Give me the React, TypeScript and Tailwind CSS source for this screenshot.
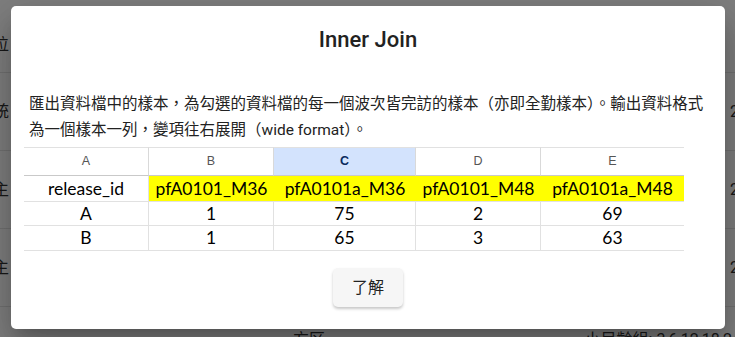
import React from 'react';

const cjk = '"Roboto", "Noto Sans CJK TC", sans-serif';

const bgRows = [
  { left: '位', right: '', h: 73 },
  { left: '統', right: '2', h: 78 },
  { left: '主', right: '2', h: 78 },
  { left: '主', right: '2', h: 78 },
];

const cols = ['A', 'B', 'C', 'D', 'E'];
const header = ['release_id', 'pfA0101_M36', 'pfA0101a_M36', 'pfA0101_M48', 'pfA0101a_M48'];
const rows = [
  ['A', '1', '75', '2', '69'],
  ['B', '1', '65', '3', '63'],
];

function SheetTable() {
  return (
    <div
      className="ml-[13px] w-[660px] grid grid-cols-[125px_125px_142px_125px_143px] text-black"
      style={{ fontFamily: '"Lato", "Open Sans", sans-serif' }}
    >
      {cols.map((c, i) => (
        <div
          key={c}
          className={`h-[29px] flex items-center justify-center border-t border-b border-t-[#e1e1e1] border-b-[#c9c9c9] ${
            i < 4 ? 'border-r border-r-[#d9d9d9]' : ''
          } ${i === 2 ? 'bg-[#d3e3fd] font-bold text-[#0b2a5c]' : 'text-[#555]'} text-[12.5px]`}
          style={{ fontFamily: '"Liberation Sans", Arial, sans-serif' }}
        >
          {c}
        </div>
      ))}
      {header.map((h, i) => (
        <div
          key={h}
          className={`h-[26px] flex items-center justify-center text-[17.5px] leading-none border-b border-[#e1e1e1] ${
            i === 0 ? 'bg-white border-r' : 'bg-[#ffff00] border-b-[#e1e1e1]'
          }`}
        >
          {h}
        </div>
      ))}
      {rows.map((r, ri) =>
        r.map((v, i) => (
          <div
            key={`${ri}-${i}`}
            className={`${ri === 0 ? 'h-[24px]' : 'h-[25px]'} flex items-center justify-center text-[17.5px] leading-none border-b border-[#e1e1e1] ${
              i < 4 ? 'border-r' : ''
            }`}
          >
            {v}
          </div>
        ))
      )}
    </div>
  );
}

export default function App() {
  return (
    <div className="relative w-[735px] h-[337px] overflow-hidden bg-white" style={{ fontFamily: cjk }}>
      {/* page behind the dialog */}
      <div className="flex flex-col text-[16px] text-[#333]">
        {bgRows.map((r, i) => (
          <div
            key={i}
            className="flex items-center justify-between border-b border-[#e4e4e4] ml-[-7px] mr-[-4px]"
            style={{ height: r.h }}
          >
            <span className={i === 0 ? 'mt-[18px]' : ''}>{r.left}</span>
            <span>{r.right}</span>
          </div>
        ))}
        <div className="flex justify-between pt-[21px] text-[16px]">
          <span className="ml-[293px]">方区</span>
          <span className="mr-[-6px]">小目齡組: 3,6,12,18,24</span>
        </div>
      </div>

      {/* backdrop */}
      <div className="absolute inset-0 bg-black/50" />

      {/* dialog */}
      <div className="absolute left-[11px] top-[6px] w-[714px] h-[323px] bg-white rounded-[5px] shadow-[0_11px_15px_-7px_rgba(0,0,0,0.2),0_24px_38px_3px_rgba(0,0,0,0.14),0_9px_46px_8px_rgba(0,0,0,0.12)] flex flex-col">
        <h2 className="pt-[19px] text-center text-[22px] leading-[30px] font-medium text-[#222]">
          Inner Join
        </h2>
        <p className="mt-[36px] pl-[18px] w-[698px] text-[15.5px] leading-[26px] text-[#222]">
          匯出資料檔中的樣本，為勾選的資料檔的每一個波次皆完訪的樣本（亦即全勤樣本）。輸出資料格式
          <br />
          為一個樣本一列，變項往右展開（wide format）。
        </p>
        <div className="mt-[4px]">
          <SheetTable />
        </div>
        <div className="mt-[17px] flex justify-center">
          <button className="w-[70px] h-[39px] rounded-[5px] bg-[#f6f6f6] text-[16px] text-[#222] shadow-[0_2px_3px_rgba(0,0,0,0.22)]">
            了解
          </button>
        </div>
      </div>
    </div>
  );
}
